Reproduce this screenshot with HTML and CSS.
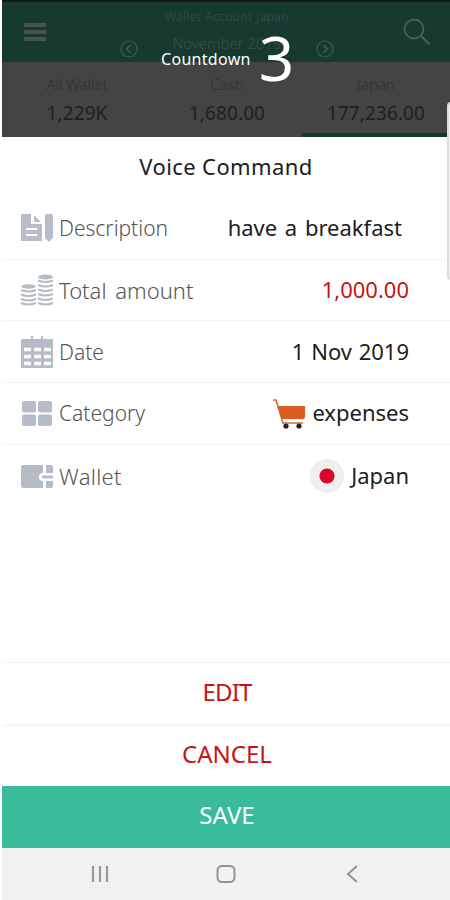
FILE: index.html
```html
<!DOCTYPE html>
<html lang="en">
<head>
    <meta charset="UTF-8">
    <title>Voice Command</title>
    <link rel="stylesheet" href="styles.css">
</head>
<body>
<div class="phone">
    <div class="top">
        <div class="bar">
            <svg class="menu" width="22" height="18" viewBox="0 0 22 18"><path d="M0 2h22M0 9h22M0 16h22" stroke="#465550" stroke-width="4"/></svg>
            <div class="bar_mid">
                <p class="account">Wallet Account Japan</p>
                <div class="month">
                    <svg width="18" height="18" viewBox="0 0 18 18" fill="none" stroke="#3b5d52"><circle cx="9" cy="9" r="8" stroke-width="1.2"/><path d="M11 5L6.500 9l4.500 4" stroke-width="1.6"/></svg>
                    <span>November 2019</span>
                    <svg width="18" height="18" viewBox="0 0 18 18" fill="none" stroke="#3b5d52"><circle cx="9" cy="9" r="8" stroke-width="1.2"/><path d="M7 5l4.500 4L7 13" stroke-width="1.6"/></svg>
                </div>
            </div>
            <svg class="search" width="28" height="28" viewBox="0 0 28 28" fill="none" stroke="#4b5c56" stroke-width="1.800"><circle cx="11" cy="11" r="9.500"/><path d="M18 18l8.500 8.500" stroke-width="2.400"/></svg>
        </div>
        <ul class="tabs">
            <li><span class="tab_name">All Wallet</span><b>1,229K</b></li>
            <li><span class="tab_name">Cash</span><b>1,680.00</b></li>
            <li class="current"><span class="tab_name">Japan</span><b>177,236.00</b></li>
        </ul>
        <div class="countdown"><span>Countdown</span><span class="num">3</span></div>
    </div>
    <h1>Voice Command</h1>
    <ul class="list">
        <li>
            <svg width="34" height="34" viewBox="0 0 34 34"><path fill="#b6bcc9" d="M1 3h10v10h11v17H1zM14 4l7 7h-7zM25 5q0-2 2-2h4q2 0 2 2v22l-4 4-4-4z"/><path d="M6 18h11M6 24h11" stroke="#fff" stroke-width="2"/></svg>
            <span class="name">Description</span>
            <span class="value breakfast">have a breakfast</span>
        </li>
        <li>
            <svg width="34" height="34" viewBox="0 0 34 34"><g fill="#b6bcc5"><ellipse cx="8.500" cy="13.500" rx="7.500" ry="2.200"/><ellipse cx="25.500" cy="4" rx="7.500" ry="2.400"/></g><path d="M1 17q7.500 3 15 0M1 21.500q7.500 3 15 0M1 26q7.500 3 15 0M1 30q7.500 3 15 0M18 7.500q7.500 3 15 0M18 12q7.500 3 15 0M18 16.500q7.500 3 15 0M18 21q7.500 3 15 0M18 25.500q7.500 3 15 0M18 30q7.500 3 15 0" fill="none" stroke="#b6bcc5" stroke-width="2"/></svg>
            <span class="name total">Total amount</span>
            <span class="value red">1,000.00</span>
        </li>
        <li>
            <svg width="34" height="34" viewBox="0 0 34 34"><path fill="#b6bcc5" d="M1 4h10V1h2v3h8V1h2v3h10v29H1z"/><path d="M4 14.500h27M4 21.500h27M4 28.500h27" stroke="#fff" stroke-width="3.600" stroke-dasharray="7 3"/></svg>
            <span class="name">Date</span>
            <span class="value day">1 Nov 2019</span>
        </li>
        <li>
            <svg width="34" height="34" viewBox="0 0 34 34" fill="#b6bcc9"><rect x="2" y="5" width="14" height="11.500" rx="2"/><rect x="18" y="5" width="14" height="11.500" rx="2"/><rect x="2" y="18.500" width="14" height="11.500" rx="2"/><rect x="18" y="18.500" width="14" height="11.500" rx="2"/></svg>
            <span class="name">Category</span>
            <svg class="cart" width="34" height="31" viewBox="0 0 34 31"><path d="M1 2h3l7 23h20" fill="none" stroke="#cd694b" stroke-width="1.600"/><path fill="#dc5b1f" d="M6 8h27v11q0 2-2 2H10z"/><circle cx="14" cy="28" r="2.600" fill="#222"/><circle cx="27" cy="28" r="2.600" fill="#222"/></svg>
            <span class="value">expenses</span>
        </li>
        <li>
            <svg width="34" height="34" viewBox="0 0 34 34"><path fill="#b6bcc5" d="M3 6h20v8q-4 0-4 4t4 4v7H3q-2 0-2-2V8q0-2 2-2zM26 6h5q2 0 2 2v6h-7zM26 22h7v5q0 2-2 2h-5zM23 16.500h10v3H23q-2-1.500 0-3z"/></svg>
            <span class="name wallet">Wallet</span>
            <svg class="flag" width="34" height="34" viewBox="0 0 34 34"><circle cx="17" cy="17" r="17" fill="#efefef"/><circle cx="17" cy="17" r="7.600" fill="#d9062c"/></svg>
            <span class="value">Japan</span>
        </li>
    </ul>
    <div class="buttons">
        <div class="btn edit">EDIT</div>
        <div class="btn cancel">CANCEL</div>
        <div class="btn save">SAVE</div>
    </div>
    <div class="nav">
        <svg width="18" height="18" viewBox="0 0 18 18"><path d="M2 1v16M9 1v16M16 1v16" stroke="#989898" stroke-width="2.200"/></svg>
        <svg width="20" height="20" viewBox="0 0 20 20"><rect x="1.500" y="2" width="17" height="16" rx="4.500" fill="none" stroke="#929292" stroke-width="2"/></svg>
        <svg width="18" height="18" viewBox="0 0 18 18"><path d="M14 1L5 9l9 8" fill="none" stroke="#929292" stroke-width="2"/></svg>
    </div>
    <div class="handle"></div>
</div>
</body>
</html>
```

FILE: styles.css
```css
* {
    margin: 0;
    padding: 0;
    list-style: none;
    box-sizing: border-box;
}
body {
    width: 450px;
    height: 900px;
    overflow: hidden;
    background: #fff;
    font-family: "Noto Sans", "Open Sans", sans-serif;
    color: #202020;
}
svg {
    display: block;
    flex: none;
}
.phone {
    position: relative;
    height: 900px;
    padding-left: 2px;
    display: flex;
    flex-direction: column;
}
.top {
    position: relative;
    height: 137px;
    background: #444;
}
.bar {
    height: 62px;
    padding: 0 19px 0 22px;
    border-top: 2px solid #101b18;
    background: #17392f;
    display: flex;
}
.menu {
    margin-top: 21px;
}
.search {
    margin-top: 16px;
    margin-left: auto;
}
.bar_mid {
    width: 214px;
    margin-left: 74px;
    color: #3b5149;
    text-align: center;
}
.account {
    font-size: 12px;
    line-height: 16px;
    padding-top: 7px;
    font-weight: 300;
    letter-spacing: .5px;
}
.month {
    display: flex;
    align-items: center;
    justify-content: space-between;
    height: 18px;
    margin-top: 15px;
    font-size: 15px;
    font-weight: 300;
}
.month span {
    position: relative;
    top: -6px;
}
.tabs {
    display: flex;
    height: 75px;
}
.tabs li {
    width: 150px;
    padding-top: 12px;
    text-align: center;
    border-bottom: 4px solid transparent;
}
.tabs li.current {
    width: 148px;
    border-color: #0b3c2d;
}
.tab_name {
    display: block;
    font-size: 15px;
    line-height: 21px;
    font-weight: 300;
    color: #303030;
}
.tabs b {
    display: block;
    margin-top: 5px;
    font-size: 19px;
    line-height: 26px;
    font-weight: 400;
    color: #202020;
    letter-spacing: .1px;
}
.countdown {
    position: absolute;
    left: 159px;
    top: 26px;
    height: 66px;
    display: flex;
    align-items: center;
    color: #fff;
    font-size: 16px;
    letter-spacing: .3px;
}
.countdown .num {
    margin-left: 8px;
    font-size: 62px;
    line-height: 66px;
    position: relative;
    top: -2px;
}
h1 {
    height: 61px;
    line-height: 59px;
    font-size: 22px;
    font-weight: 400;
    text-align: center;
    letter-spacing: .4px;
}
.list li {
    height: 61.700px;
    padding: 0 41px 0 18px;
    border-bottom: 1px solid #f4f4f4;
    display: flex;
    align-items: center;
}
.list li:last-child {
    border: 0;
}
.name {
    margin-left: 5px;
    font-size: 21px;
    font-weight: 300;
    color: #555;
}
.total {
    font-size: 22px;
    word-spacing: 3px;
}
.wallet {
    font-size: 22px;
    letter-spacing: .3px;
}
.value {
    margin-left: auto;
    font-size: 22px;
    position: relative;
    top: -1px;
}
.breakfast {
    margin-right: 7px;
    word-spacing: 2px;
}
.day {
    word-spacing: 1px;
}
.red {
    color: #c41414;
}
.cart, .flag {
    margin-left: auto;
}
.cart + .value {
    margin-left: 6px;
}
.flag + .value {
    margin-left: 7px;
}
.buttons {
    margin-top: auto;
}
.btn {
    height: 62px;
    line-height: 58px;
    padding-left: 2px;
    font-size: 24px;
    text-align: center;
    color: #c41414;
}
.edit {
    border-top: 1px solid #f2f2f2;
    letter-spacing: -.8px;
}
.cancel {
    border-top: 3px solid #f7f7f7;
    line-height: 54px;
}
.save {
    background: #38bc9c;
    color: #fff;
}
.nav {
    height: 52px;
    padding: 0 89px;
    background: #f1f1f1;
    display: flex;
    align-items: center;
    justify-content: space-between;
}
.handle {
    position: absolute;
    left: 447px;
    top: 102px;
    width: 8px;
    height: 178px;
    border: 2px solid #ddd;
    border-radius: 5px;
    background: #f8f8f8;
}
```
